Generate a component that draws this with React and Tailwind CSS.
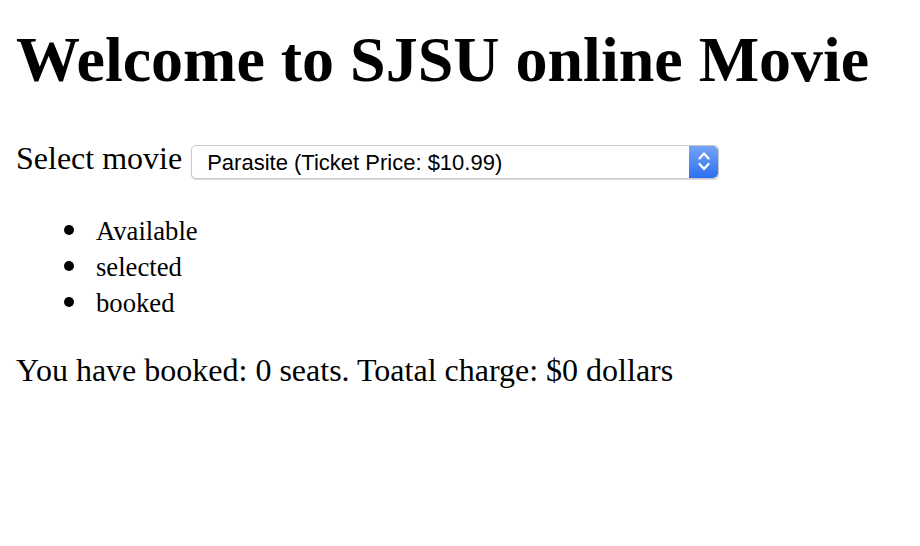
import React, { useState } from "react";

const movies = [
  { name: "Parasite", price: 10.99 },
  { name: "Joker", price: 12 },
  { name: "Toy Story 4", price: 8 },
  { name: "The Lion King", price: 9 },
];

const legend = ["Available", "selected", "booked"];

function Stepper() {
  return (
    <div className="flex h-full w-[29px] shrink-0 items-center justify-center rounded-r-[5px] bg-gradient-to-b from-[#74a4f7] to-[#2d6ef1]">
      <svg width="14" height="34" viewBox="0 0 14 34" fill="none">
        <path d="M2.5 13.5 L7 8.5 L11.5 13.5" stroke="white" strokeWidth="2.2" strokeLinecap="round" strokeLinejoin="round" />
        <path d="M2.5 19 L7 24 L11.5 19" stroke="white" strokeWidth="2.2" strokeLinecap="round" strokeLinejoin="round" />
      </svg>
    </div>
  );
}

export default function App() {
  const [movie, setMovie] = useState(0);
  const booked = 0;
  const total = booked * movies[movie].price;

  return (
    <div className="min-h-screen bg-white px-4 text-black [font-family:'Liberation_Serif','Times_New_Roman',serif]">
      <h1 className="mt-[23px] text-[64px] font-bold leading-[74px]">
        Welcome to SJSU online Movie
      </h1>

      {/* movie picker */}
      <div className="mt-[43px] flex items-start">
        <label htmlFor="movie" className="text-[32px] leading-[36px]">
          Select movie
        </label>
        <div className="ml-[9px] mt-[5px] flex h-[34px] w-[528px] overflow-hidden rounded-[5px] border border-[#c8c8c8] bg-white shadow-[0_1px_1px_rgba(0,0,0,0.15)]">
          <select
            id="movie"
            value={movie}
            onChange={(e) => setMovie(Number(e.target.value))}
            className="h-full flex-1 appearance-none bg-transparent pl-[15px] text-[22px] outline-none [font-family:'Liberation_Sans',Arial,sans-serif]"
          >
            {movies.map((m, i) => (
              <option key={m.name} value={i}>
                {m.name} (Ticket Price: ${m.price.toFixed(2)})
              </option>
            ))}
          </select>
          <Stepper />
        </div>
      </div>

      {/* legend */}
      <ul className="mt-[34px] pl-[48px] text-[26.67px] leading-[36px]">
        {legend.map((item) => (
          <li key={item} className="flex items-center">
            <span className="mb-[3px] h-[10px] w-[10px] shrink-0 rounded-full bg-black" />
            <span className="ml-[22px]">{item}</span>
          </li>
        ))}
      </ul>

      <p className="mt-[31px] text-[32px] leading-[36px]">
        You have booked: {booked} seats. Toatal charge: ${total} dollars
      </p>
    </div>
  );
}
